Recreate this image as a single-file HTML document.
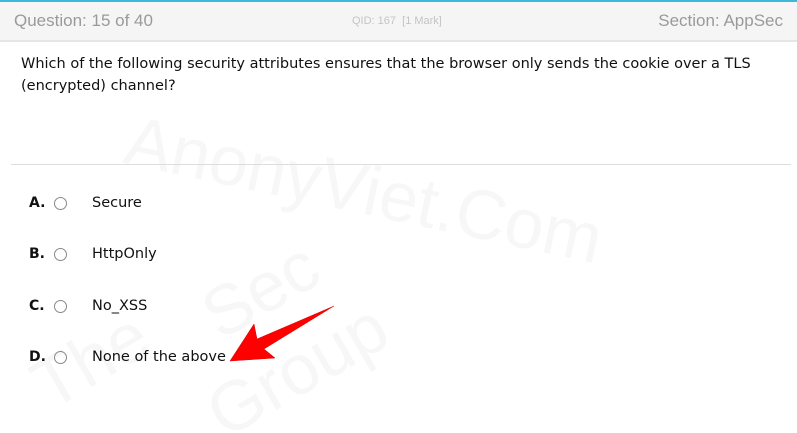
<!DOCTYPE html>
<html><head><meta charset="utf-8"><style>
html,body{margin:0;padding:0;width:797px;height:433px;overflow:hidden;background:#fff;position:relative;font-family:"DejaVu Sans",Verdana,sans-serif;}
.wmbox{position:absolute;left:0;top:0;width:797px;height:433px;overflow:hidden;}
.top{position:absolute;left:0;top:0;width:797px;height:2px;background:#3cb8d8;}
.hdr{position:absolute;left:0;top:2px;width:797px;height:38px;background:#f5f5f5;border-bottom:2px solid #e6e6e6;font-family:"Liberation Sans",Arial,sans-serif;color:#9a9a9a;}
.hdr .l{position:absolute;left:14px;top:9px;font-size:17px;}
.hdr .m{position:absolute;left:352px;top:13px;font-size:11px;color:#c4c4c4;}
.hdr .r{position:absolute;right:14px;top:9px;font-size:17px;}
.q{position:absolute;left:21px;top:53px;font-size:14.5px;line-height:22px;color:#111;width:770px;}
.hr{position:absolute;left:11px;top:164px;width:780px;height:1px;background:#ddd;}
.opt{position:absolute;left:29px;font-size:14px;color:#111;}
.rad{position:absolute;left:54px;width:11px;height:11px;border:1px solid #888;border-radius:50%;}
.txt{position:absolute;left:92px;font-size:14.5px;color:#111;}
.wm{position:absolute;font-family:"Liberation Sans",sans-serif;color:#f7f7f7;}
</style></head><body>
<div class="wmbox">
<div class="wm" style="left:135px;top:100px;font-size:70px;transform:rotate(12deg);transform-origin:left top;">AnonyViet.Com</div>
<div class="wm" style="left:200px;top:250px;font-size:70px;transform:rotate(-30deg);">Sec</div>
<div class="wm" style="left:30px;top:320px;font-size:70px;transform:rotate(-30deg);">The</div>
<div class="wm" style="left:200px;top:330px;font-size:70px;transform:rotate(-30deg);">Group</div>
</div>
<div class="top"></div>
<div class="hdr"><span class="l">Question: 15 of 40</span><span class="m">QID: 167 &nbsp;[1 Mark]</span><span class="r">Section: AppSec</span></div>
<div class="q">Which of the following security attributes ensures that the browser only sends the cookie over a TLS (encrypted) channel?</div>
<div class="hr"></div>
<div class="opt" style="top:195px"><b>A.</b></div><div class="rad" style="top:197px"></div><div class="txt" style="top:195px">Secure</div>
<div class="opt" style="top:246px"><b>B.</b></div><div class="rad" style="top:248px"></div><div class="txt" style="top:246px">HttpOnly</div>
<div class="opt" style="top:298px"><b>C.</b></div><div class="rad" style="top:300px"></div><div class="txt" style="top:298px">No_XSS</div>
<div class="opt" style="top:349px"><b>D.</b></div><div class="rad" style="top:351px"></div><div class="txt" style="top:349px">None of the above</div>
<svg style="position:absolute;left:0;top:0" width="797" height="433"><path d="M230 361 L254 324 L257 339 L334 306 L264 349 L275 358 Z" fill="#f00" stroke="#d00" stroke-width="0.5"/></svg>
</body></html>
